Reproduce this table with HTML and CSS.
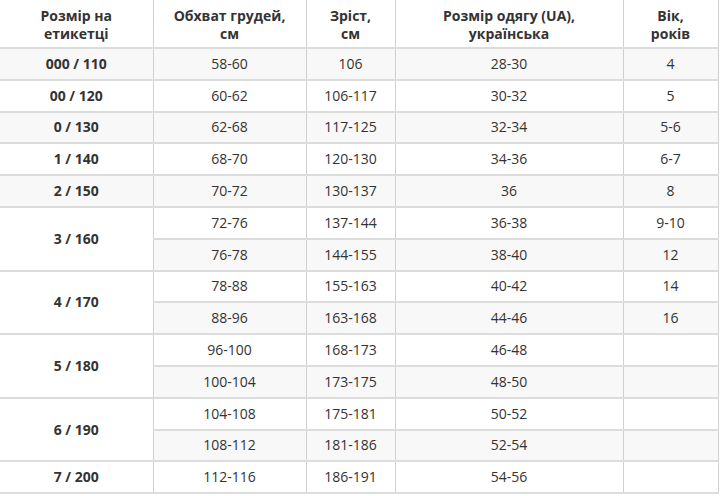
FILE: index.html
```html
<!DOCTYPE html>
<html lang="uk">
<head>
<meta charset="utf-8">
<link rel="stylesheet" href="styles.css">
</head>
<body>
<table class="size-table">
  <colgroup>
    <col class="c1"><col class="c2"><col class="c3"><col class="c4"><col class="c5">
  </colgroup>
  <thead>
    <tr>
      <th>Розмір на<br>етикетці</th>
      <th>Обхват грудей,<br>см</th>
      <th>Зріст,<br>см</th>
      <th>Розмір одягу (UA),<br>українська</th>
      <th>Вік,<br>років</th>
    </tr>
  </thead>
  <tbody>
    <tr><td class="label">000 / 110</td><td>58-60</td><td>106</td><td>28-30</td><td>4</td></tr>
    <tr><td class="label">00 / 120</td><td>60-62</td><td>106-117</td><td>30-32</td><td>5</td></tr>
    <tr><td class="label">0 / 130</td><td>62-68</td><td>117-125</td><td>32-34</td><td>5-6</td></tr>
    <tr><td class="label">1 / 140</td><td>68-70</td><td>120-130</td><td>34-36</td><td>6-7</td></tr>
    <tr><td class="label">2 / 150</td><td>70-72</td><td>130-137</td><td>36</td><td>8</td></tr>
    <tr><td class="label" rowspan="2">3 / 160</td><td>72-76</td><td>137-144</td><td>36-38</td><td>9-10</td></tr>
    <tr><td>76-78</td><td>144-155</td><td>38-40</td><td>12</td></tr>
    <tr><td class="label" rowspan="2">4 / 170</td><td>78-88</td><td>155-163</td><td>40-42</td><td>14</td></tr>
    <tr><td>88-96</td><td>163-168</td><td>44-46</td><td>16</td></tr>
    <tr><td class="label" rowspan="2">5 / 180</td><td>96-100</td><td>168-173</td><td>46-48</td><td></td></tr>
    <tr><td>100-104</td><td>173-175</td><td>48-50</td><td></td></tr>
    <tr><td class="label" rowspan="2">6 / 190</td><td>104-108</td><td>175-181</td><td>50-52</td><td></td></tr>
    <tr><td>108-112</td><td>181-186</td><td>52-54</td><td></td></tr>
    <tr><td class="label">7 / 200</td><td>112-116</td><td>186-191</td><td>54-56</td><td></td></tr>
  </tbody>
</table>
</body>
</html>
```
FILE: styles.css
```css
html, body {
  margin: 0;
  padding: 0;
  background: #fff;
}
.size-table {
  width: 718px;
  border-collapse: collapse;
  table-layout: fixed;
  font-family: "Open Sans", "Noto Sans", sans-serif;
  font-size: 14px;
  color: #333;
}
.c1 { width: 153px; }
.c2 { width: 153px; }
.c3 { width: 89px; }
.c4 { width: 228px; }
.c5 { width: 95px; }
.size-table th,
.size-table td {
  text-align: center;
  vertical-align: middle;
  padding: 0;
  border-left: 1px solid #d0d0d0;
  border-right: 1px solid #d0d0d0;
  border-bottom: 2px solid #dcdcdc;
}
.size-table th:first-child,
.size-table td.label {
  border-left: none;
}
.size-table th {
  height: 45px;
  font-weight: 700;
  line-height: 18px;
  padding-top: 2px;
}
.size-table td {
  height: 29.8px;
  line-height: 18px;
}
.size-table tbody tr:nth-child(odd) {
  background: #f8f8f8;
}
.size-table td.label {
  font-weight: 700;
}
```
